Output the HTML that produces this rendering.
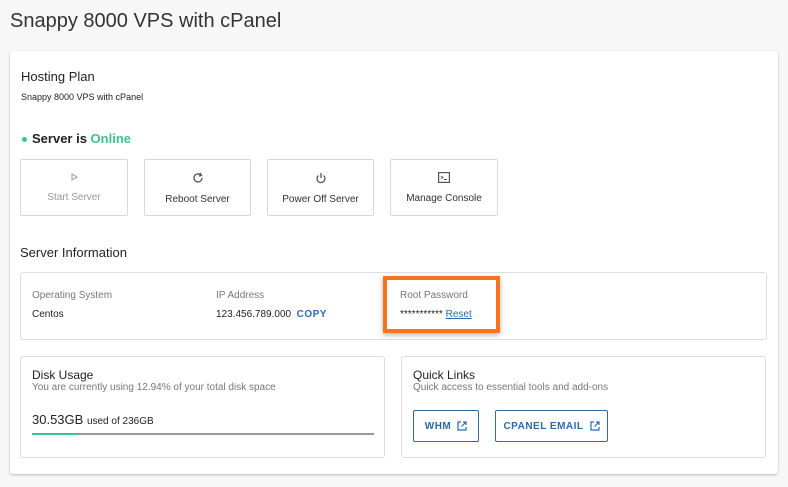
<!DOCTYPE html>
<html><head><style>
*{box-sizing:border-box;margin:0;padding:0}
body{width:788px;height:487px;background:#f7f7f7;font-family:"Liberation Sans",sans-serif;color:#222;position:relative;overflow:hidden}
.a{position:absolute}
.card{left:10px;top:51px;width:768px;height:423px;background:#fff;border-radius:3px;box-shadow:0 1px 2px rgba(0,0,0,.25)}
.btn{top:159px;height:57px;border:1px solid #d8d8d8;border-radius:2px;background:#fff;text-align:center;font-size:10px;color:#333}
.btn svg{display:block;margin:12px auto 10px}
.box{border:1px solid #ddd;border-radius:3px;background:#fff}
.lbl{font-size:10px;color:#777}
.val{font-size:10px;color:#222}
.lb{border:1px solid #2a6bb0;border-radius:2px;color:#2a6bb0;font-size:10px;font-weight:bold;letter-spacing:.5px;display:flex;align-items:center;justify-content:center;gap:6px}
</style></head><body>
<div class="a" style="left:10px;top:10px;font-size:20px;color:#333">Snappy 8000 VPS with cPanel</div>
<div class="a card"></div>
<div class="a" style="left:21px;top:69px;font-size:13px">Hosting Plan</div>
<div class="a" style="left:21px;top:92px;font-size:9px">Snappy 8000 VPS with cPanel</div>
<div class="a" style="left:22px;top:137px;width:5px;height:5px;border-radius:50%;background:#3cc48b"></div>
<div class="a" style="left:32px;top:131px;font-size:13px;font-weight:bold">Server is <span style="color:#3cc48b">Online</span></div>
<div class="a btn" style="left:20px;width:108px;color:#999"><svg width="10" height="10" viewBox="0 0 10 10"><path d="M3 2L8 5L3 8Z" fill="none" stroke="#aaa" stroke-width="1.2"/></svg>Start Server</div>
<div class="a btn" style="left:144px;width:107px"><svg width="12" height="12" viewBox="0 0 12 12"><path d="M10 6A4 4 0 1 1 8.5 2.8" fill="none" stroke="#555" stroke-width="1.3"/><path d="M8 1L9.5 3.5L6.8 4" fill="none" stroke="#555" stroke-width="1.3"/></svg>Reboot Server</div>
<div class="a btn" style="left:267px;width:107px"><svg width="12" height="12" viewBox="0 0 12 12"><path d="M3.5 3.5A4 4 0 1 0 8.5 3.5" fill="none" stroke="#555" stroke-width="1.3"/><path d="M6 1V6" stroke="#555" stroke-width="1.3"/></svg>Power Off Server</div>
<div class="a btn" style="left:390px;width:108px"><svg width="12" height="11" viewBox="0 0 12 11"><rect x=".6" y=".6" width="10.8" height="9.8" fill="none" stroke="#555" stroke-width="1.2"/><path d="M3 4L5 5.5L3 7M6 7.5H9" fill="none" stroke="#555" stroke-width="1"/></svg>Manage Console</div>
<div class="a" style="left:20px;top:245px;font-size:13px">Server Information</div>
<div class="a box" style="left:20px;top:272px;width:747px;height:68px"></div>
<div class="a lbl" style="left:32px;top:290px">Operating System</div>
<div class="a val" style="left:32px;top:309px">Centos</div>
<div class="a lbl" style="left:216px;top:290px">IP Address</div>
<div class="a val" style="left:216px;top:309px">123.456.789.000 &nbsp;<b style="color:#2a6bb0;letter-spacing:.5px">COPY</b></div>
<div class="a" style="left:383px;top:276px;width:117px;height:57px;border:4px solid #f9731e;box-shadow:0 2px 5px rgba(0,0,0,.3)"></div>
<div class="a lbl" style="left:400px;top:290px">Root Password</div>
<div class="a val" style="left:400px;top:309px">*********** <span style="color:#2a6bb0;text-decoration:underline">Reset</span></div>
<div class="a box" style="left:20px;top:356px;width:365px;height:102px"></div>
<div class="a" style="left:32px;top:368px;font-size:12px">Disk Usage</div>
<div class="a lbl" style="left:32px;top:382px">You are currently using 12.94% of your total disk space</div>
<div class="a" style="left:32px;top:412px;font-size:13px">30.53GB <span style="font-size:10px">used of 236GB</span></div>
<div class="a" style="left:32px;top:433px;width:342px;height:2px;background:#999"></div>
<div class="a" style="left:32px;top:433px;width:44px;height:2px;background:#3cc48b"></div>
<div class="a box" style="left:401px;top:356px;width:365px;height:102px"></div>
<div class="a" style="left:413px;top:368px;font-size:12px">Quick Links</div>
<div class="a lbl" style="left:413px;top:382px">Quick access to essential tools and add-ons</div>
<div class="a lb" style="left:413px;top:410px;width:66px;height:32px">WHM <svg width="10" height="10" viewBox="0 0 10 10"><path d="M4 1H1V9H9V6M6 1H9V4M9 1L4.5 5.5" fill="none" stroke="#2a6bb0" stroke-width="1.2"/></svg></div>
<div class="a lb" style="left:495px;top:410px;width:113px;height:32px">CPANEL EMAIL <svg width="10" height="10" viewBox="0 0 10 10"><path d="M4 1H1V9H9V6M6 1H9V4M9 1L4.5 5.5" fill="none" stroke="#2a6bb0" stroke-width="1.2"/></svg></div>
</body></html>
